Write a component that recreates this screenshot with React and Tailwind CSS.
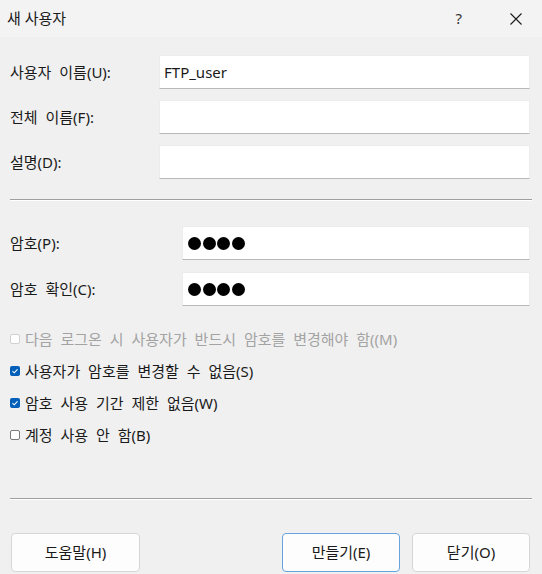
import React from "react";

const font = { fontFamily: '"Noto Sans", "Noto Sans CJK KR", sans-serif' };

function Field({ label, value, dots, inputLeft }) {
  return (
    <div className="flex items-center h-[34px]">
      <div className={`${inputLeft} shrink-0 pl-[10px] text-[15px] text-[#1a1a1a] leading-none [word-spacing:4px]`}>{label}</div>
      <div className="flex-1 h-full bg-white border border-[#ececec] border-b-[#b8b8b8] flex items-center px-[4px] text-[15px] text-[#1a1a1a]">
        {value}
        {dots && (
          <div className="flex gap-[1.5px] pl-[1px]">
            <span className="w-[13px] h-[13px] rounded-full bg-black" />
            <span className="w-[13px] h-[13px] rounded-full bg-black" />
            <span className="w-[13px] h-[13px] rounded-full bg-black" />
            <span className="w-[13px] h-[13px] rounded-full bg-black" />
          </div>
        )}
      </div>
    </div>
  );
}

function Check({ label, checked, disabled }) {
  return (
    <div className="flex items-center h-[32px] pl-[10px]">
      {checked ? (
        <span className="w-[10px] h-[10px] rounded-[2px] bg-[#005fb8] flex items-center justify-center">
          <svg width="8" height="8" viewBox="0 0 8 8">
            <path d="M1.5 4.2 L3.2 5.8 L6.5 2.3" stroke="white" strokeWidth="1.1" fill="none" />
          </svg>
        </span>
      ) : (
        <span
          className={`w-[10px] h-[10px] rounded-[2px] bg-white border ${
            disabled ? "border-[#d0d0d0]" : "border-[#7a7a7a]"
          }`}
        />
      )}
      <span
        className={`ml-[5px] text-[15px] leading-none [word-spacing:4px] ${disabled ? "text-[#a3a3a3]" : "text-[#1a1a1a]"}`}
      >
        {label}
      </span>
    </div>
  );
}

function Btn({ children, primary }) {
  return (
    <div
      className={`h-[39px] flex items-center justify-center bg-[#fdfdfd] rounded-[4px] border text-[15px] text-[#1a1a1a] ${
        primary ? "border-[#68a4dc]" : "border-[#d6d6d6]"
      }`}
    >
      {children}
    </div>
  );
}

export default function App() {
  return (
    <div className="w-[542px] h-[574px] bg-[#f0f0f0] flex flex-col overflow-hidden" style={font}>
      <div className="h-[37px] bg-[#f3f3f3] flex items-center shrink-0">
        <span className="pl-[7px] text-[15px] text-[#1a1a1a] leading-none">새 사용자</span>
        <span className="ml-auto text-[15px] text-[#333] leading-none mr-[48px]">?</span>
        <svg width="12" height="12" viewBox="0 0 12 12" className="mr-[20px]">
          <path d="M0.5 0.5 L11.5 11.5 M11.5 0.5 L0.5 11.5" stroke="#1a1a1a" strokeWidth="1.1" />
        </svg>
      </div>

      <div className="pr-[12px] pt-[18px] flex flex-col gap-[11px]">
        <Field label="사용자 이름(U):" value="FTP_user" inputLeft="w-[159px]" />
        <Field label="전체 이름(F):" inputLeft="w-[159px]" />
        <Field label="설명(D):" inputLeft="w-[159px]" />
      </div>

      <div className="mx-[10px] mt-[20px] h-[2px] border-t border-[#a0a0a0] bg-white" />

      <div className="pr-[12px] pt-[25px] flex flex-col gap-[12px]">
        <Field label="암호(P):" dots inputLeft="w-[182px]" />
        <Field label="암호 확인(C):" dots inputLeft="w-[182px]" />
      </div>

      <div className="pt-[17px] flex flex-col">
        <Check label="다음 로그온 시 사용자가 반드시 암호를 변경해야 함((M)" disabled />
        <Check label="사용자가 암호를 변경할 수 없음(S)" checked />
        <Check label="암호 사용 기간 제한 없음(W)" checked />
        <Check label="계정 사용 안 함(B)" />
      </div>

      <div className="mx-[10px] mt-[47px] h-[2px] border-t border-[#a0a0a0] bg-white" />

      <div className="mt-[33px] flex pl-[11px] pr-[12px]">
        <div className="w-[129px]">
          <Btn>도움말(H)</Btn>
        </div>
        <div className="ml-auto w-[118px]">
          <Btn primary>만들기(E)</Btn>
        </div>
        <div className="ml-[12px] w-[118px]">
          <Btn>닫기(O)</Btn>
        </div>
      </div>
    </div>
  );
}
